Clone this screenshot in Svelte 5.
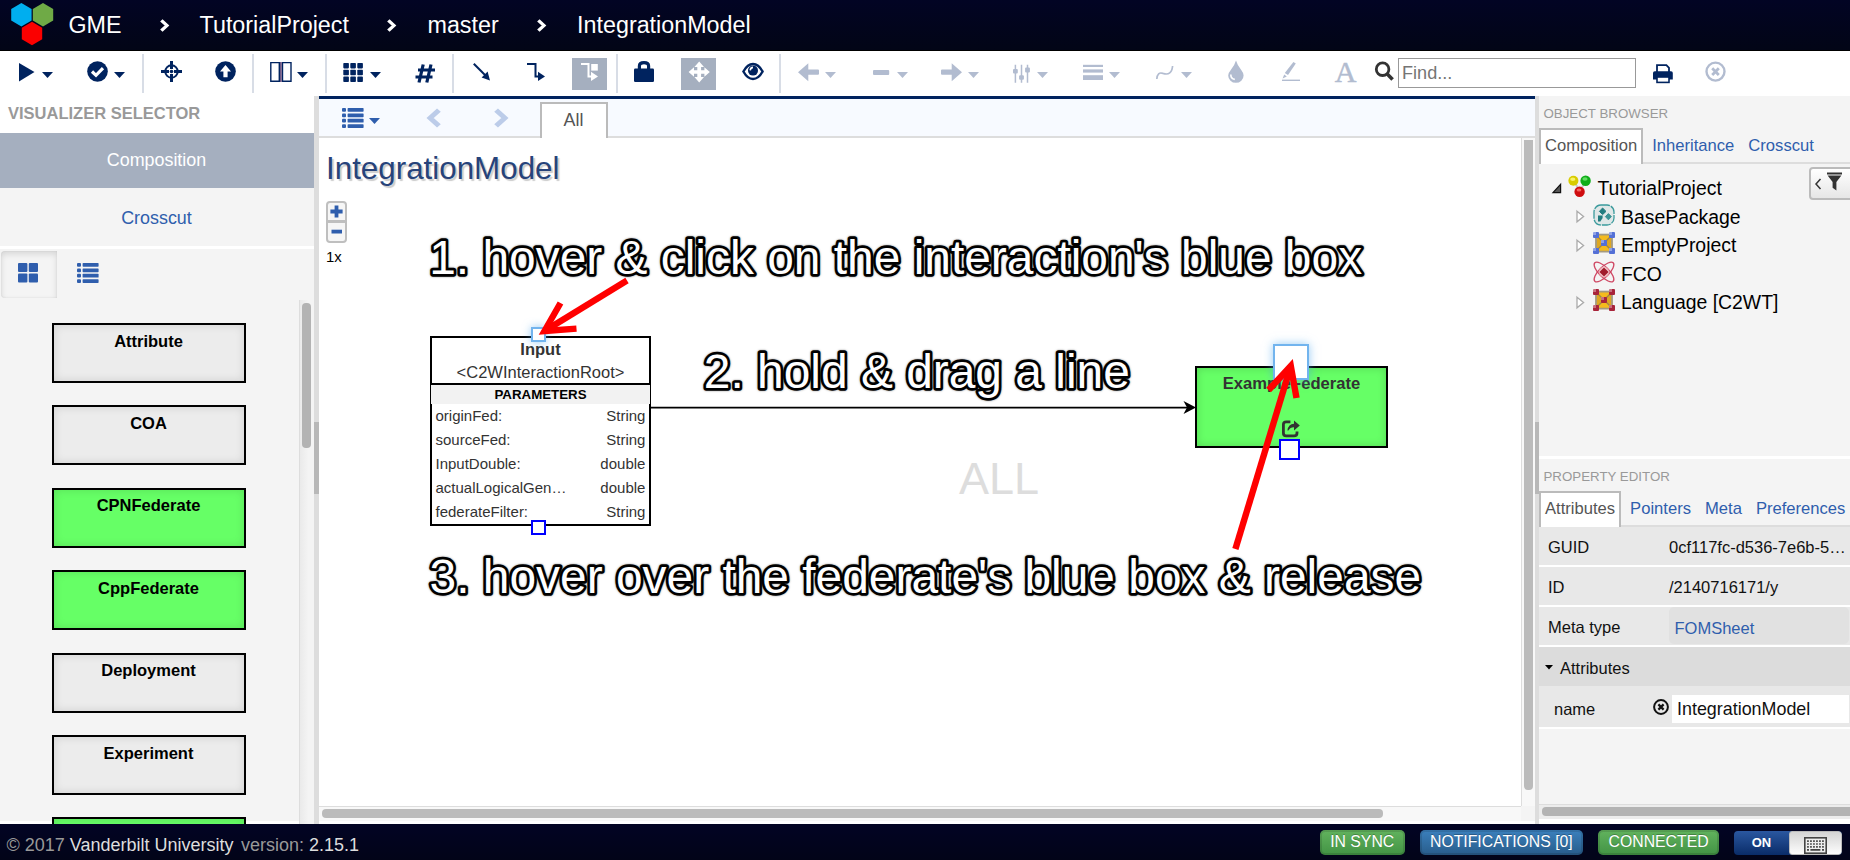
<script>
  const crumbs = [
    { text: 'GME', gap: 14.4 },
    { text: 'TutorialProject', gap: 30.5 },
    { text: 'master', gap: 31 },
    { text: 'IntegrationModel', gap: 30.8 }
  ];

  // icon name, width, space before it, and the space before its caret (if it has one)
  const tools = [
    { i: 'play', w: 15, g: 19, c: 8 },
    { i: 'check', w: 21, g: 34, c: 6 },
    { sep: true, g: 17 },
    { i: 'cross', w: 21, g: 17 },
    { i: 'up', w: 21, g: 33 },
    { sep: true, g: 16 },
    { i: 'cols', w: 22, g: 16, c: 5 },
    { sep: true, g: 17 },
    { i: 'grid', w: 20, g: 16, c: 7 },
    { i: 'hash', w: 20, g: 34 },
    { sep: true, g: 17 },
    { i: 'line', w: 18, g: 19 },
    { i: 'elbow', w: 18, g: 36 },
    { i: 'route', w: 35, g: 27, on: true },
    { sep: true, g: 9 },
    { i: 'lock', w: 21, g: 16 },
    { i: 'move', w: 35, g: 26, on: true },
    { i: 'eye', w: 22, g: 26 },
    { sep: true, g: 15 },
    { i: 'left', w: 21, g: 17, c: 6, off: true },
    { i: 'minus', w: 16, g: 37, c: 8, off: true },
    { i: 'right', w: 21, g: 33, c: 6, off: true },
    { i: 'sliders', w: 17, g: 34, c: 7, off: true },
    { i: 'lines', w: 20, g: 35, c: 6, off: true },
    { i: 'curve', w: 18, g: 36, c: 7, off: true },
    { i: 'drop', w: 16, g: 36, off: true },
    { i: 'pen', w: 18, g: 38, off: true },
    { i: 'font', w: 21, g: 35, off: true }
  ];

  const parts = [
    { name: 'Attribute' },
    { name: 'COA' },
    { name: 'CPNFederate', green: true },
    { name: 'CppFederate', green: true },
    { name: 'Deployment' },
    { name: 'Experiment' },
    { name: '', green: true }
  ];

  const params = [
    ['originFed:', 'String'],
    ['sourceFed:', 'String'],
    ['InputDouble:', 'double'],
    ['actualLogicalGen…', 'double'],
    ['federateFilter:', 'String']
  ];

  const tree = [
    { name: 'BasePackage', icon: 'pkg', open: true },
    { name: 'EmptyProject', icon: 'blue', open: true },
    { name: 'FCO', icon: 'atom', open: false },
    { name: 'Language [C2WT]', icon: 'red', open: true }
  ];
</script>

{#snippet caret()}
  <svg class="caret" width="11" height="6" viewBox="0 0 11 6"><path d="M0 0H11L5.5 6Z" fill="currentColor" /></svg>
{/snippet}

{#snippet listIcon()}
  <svg width="22" height="20" viewBox="0 0 22 20" fill="currentColor">
    {#each [0, 5.4, 10.8, 16.2] as y}
      <rect x="0" {y} width="4" height="3.8" rx="1" />
      <rect x="5.6" {y} width="16" height="3.8" rx=".7" />
    {/each}
  </svg>
{/snippet}

{#snippet chevron(w, h, s)}
  <svg width={w} height={h} viewBox="0 0 8 13" preserveAspectRatio="none"><path d="M1.2 1.4L6.2 6.5L1.2 11.6" fill="none" stroke="currentColor" stroke-width={s} /></svg>
{/snippet}

{#snippet hollowArrow()}
  <svg width="9" height="13" viewBox="0 0 9 13"><path d="M1 1.2L7.6 6.5L1 11.8Z" fill="#fff" stroke="#aaa" stroke-width="1.3" /></svg>
{/snippet}

{#snippet glyph(name, w)}
  <svg width={w} height="22" viewBox="0 0 {w} 22" fill="currentColor">
    {#if name === 'play'}
      <path d="M0 2L15.5 11L0 20.4Z" />
    {:else if name === 'check'}
      <circle cx="10.5" cy="10.5" r="10.3" /><path d="M5 10.5L9 14.3L16 7.2" fill="none" stroke="#fff" stroke-width="3.2" />
    {:else if name === 'cross'}
      <circle cx="10.5" cy="10.5" r="6.2" fill="none" stroke="currentColor" stroke-width="2" />
      <path d="M10.5 0V8M10.5 13V21M0 10.5H8M13 10.5H21" stroke="currentColor" stroke-width="3" />
      <circle cx="10.5" cy="10.5" r="1.8" />
    {:else if name === 'up'}
      <circle cx="10.5" cy="10.5" r="10.3" /><path d="M10.5 4L16 10.4H12.6V16.2H8.4V10.4H5Z" fill="#fff" />
    {:else if name === 'cols'}
      <path d="M.8 1.6H9.3V20.2H.8ZM12.5 1.6H21V20.2H12.5Z" fill="none" stroke="currentColor" stroke-width="1.4" />
      <path d="M10.9 1V21" stroke="#6f5a86" stroke-width="1.8" />
    {:else if name === 'grid'}
      {#each [2, 8.8, 15.6] as y}
        {#each [0.3, 7.3, 14.3] as x}<rect {x} {y} width="5.6" height="5.4" rx=".8" />{/each}
      {/each}
    {:else if name === 'hash'}
      <path d="M8.2 3.5L4 21.5M16 3.5L11.8 21.5M3 9H20M.5 16H17.5" fill="none" stroke="currentColor" stroke-width="3.2" />
    {:else if name === 'line'}
      <path d="M.8 2.8L13 15" stroke="currentColor" stroke-width="2" /><path d="M17 19.4L8.6 16.6L14.6 10.6Z" />
    {:else if name === 'elbow'}
      <path d="M0 3H8.5V15.6H12" fill="none" stroke="currentColor" stroke-width="2" /><path d="M11 10.8L18 15.4L11 20Z" />
    {:else if name === 'route'}
      <path d="M9 3H16.5V15.6H20" fill="none" stroke="currentColor" stroke-width="2" /><path d="M19 10.8L26 15.4L19 20Z" />
      <rect x="19.2" y="3" width="6.6" height="6.6" />
    {:else if name === 'lock'}
      <rect x="0" y="7.6" width="20" height="13.4" rx="1.2" /><path d="M5.4 9V5Q5.4 1.6 10 1.6T14.6 5V9" fill="none" stroke="currentColor" stroke-width="3.2" />
    {:else if name === 'move'}
      <path d="M18.2 .5L23 6H20.1V9.2H23.4V6.2L28.8 11L23.4 15.8V12.8H20.1V16H23L18.2 21.5L13.4 16H16.3V12.8H13V15.8L7.6 11L13 6.2V9.2H16.3V6H13.4Z" />
    {:else if name === 'eye'}
      <path d="M1.4 10.5Q5.5 3 11 3T20.6 10.5Q16.5 18 11 18T1.4 10.5Z" fill="none" stroke="currentColor" stroke-width="2.4" />
      <circle cx="11" cy="9.6" r="5" /><path d="M8.2 9.4Q8.4 6.6 11 6.4" fill="none" stroke="#fff" stroke-width="1.6" />
    {:else if name === 'left'}
      <path d="M0 11.2L10.3 2.2V8.6H20Q21 8.6 21 9.6V12.8Q21 13.8 20 13.8H10.3V20.2Z" />
    {:else if name === 'minus'}
      <rect x="0" y="9" width="16.2" height="5" rx="1" />
    {:else if name === 'right'}
      <path d="M21 11.2L10.7 2.2V8.6H1Q0 8.6 0 9.6V12.8Q0 13.8 1 13.8H10.7V20.2Z" />
    {:else if name === 'sliders'}
      <path d="M2.4 3.8V21.8M8.5 3.8V21.8M14.5 3.8V21.8" stroke="currentColor" stroke-width="1.5" />
      <rect x="0" y="8" width="4.8" height="4.6" rx="1" /><rect x="6.1" y="14.2" width="4.8" height="4.6" rx="1" /><rect x="12.1" y="6.6" width="4.8" height="4.8" rx="1" />
    {:else if name === 'lines'}
      <rect y="3.8" width="20" height="2.2" /><rect y="8.4" width="20" height="3.2" /><rect y="14.2" width="20" height="4.8" />
    {:else if name === 'curve'}
      <path d="M.8 18Q1.4 10.4 7 12.4Q15.6 15.2 16.6 5" fill="none" stroke="currentColor" stroke-width="1.7" />
    {:else if name === 'drop'}
      <path d="M8 -.6Q9.4 4.4 13.4 9.2Q15.6 12 15.6 14.4A7.7 7.4 0 0 1 .2 14.4Q.2 12 2.6 9.2Q6.6 4.4 8 -.6Z" />
      <path d="M2.8 13.6Q2.8 18 6.8 18.4" fill="none" stroke="#fff" stroke-width="1.6" />
    {:else if name === 'pen'}
      <path d="M11.4 1L13.8 2.6L6 14L2.8 12Z" /><path d="M2.2 13.4L4.8 15.4L.6 17.4Z" /><rect x="0" y="18.6" width="18" height="1.4" />
    {:else if name === 'font'}
      <text x="10.5" y="21.4" text-anchor="middle" font-family="Liberation Serif, serif" font-size="30" stroke="currentColor" stroke-width=".5">A</text>
    {:else if name === 'search'}
      <circle cx="7.6" cy="8.2" r="6.3" fill="none" stroke="currentColor" stroke-width="2.8" /><path d="M12 12.8L17.6 18.4" stroke="currentColor" stroke-width="3.6" />
    {:else if name === 'print'}
      <path d="M4 11V4.2H13.4L16 6.8V11" fill="none" stroke="currentColor" stroke-width="1.8" />
      <path d="M0 12Q0 10.2 1.8 10.2H18Q19.8 10.2 19.8 12V18.4H0Z" /><rect x="4" y="16" width="12" height="5.4" fill="#fff" stroke="currentColor" stroke-width="1.6" />
    {:else if name === 'close'}
      <circle cx="10.5" cy="10.6" r="9" fill="none" stroke="currentColor" stroke-width="2.4" /><path d="M7.2 7.3L13.8 13.9M13.8 7.3L7.2 13.9" stroke="currentColor" stroke-width="2.8" />
    {/if}
  </svg>
{/snippet}

{#snippet treeIcon(name)}
  <svg width="22" height="22" viewBox="0 0 22 22">
    {#if name === 'pkg'}
      <rect x="1" y="1" width="20" height="20" rx="7" fill="#dfe7e7" stroke="#3a9a9c" stroke-width="1.3" stroke-dasharray="9 1" />
      <path d="M9.6 4L13 7.4L9.6 10.6L6.4 7.4Z" fill="#237d80" stroke="#237d80" stroke-linejoin="round" /><path d="M5 11.6H9.6V14L7.4 17.4H5Z" fill="#237d80" /><path d="M15.4 9.6L18.4 12.6L15.4 15.8L12.4 12.6Z" fill="#3d9496" stroke="#3d9496" stroke-linejoin="round" />
    {:else if name === 'atom'}
      <g fill="none" stroke="#cf4763" stroke-width="1.3">
        <ellipse cx="11" cy="11" rx="13" ry="5" transform="rotate(45 11 11)" /><ellipse cx="11" cy="11" rx="13" ry="5" transform="rotate(-45 11 11)" />
      </g>
      <circle cx="11" cy="11" r="5.4" fill="#f2b8be" opacity=".7" /><path d="M11 6.4L15.6 11L11 15.6L6.4 11Z" fill="#a01b2c" />
    {:else}
      {@const c = name === 'blue' ? '#5470d6' : '#a8243a'}
      <rect x="3" y="2.6" width="16" height="17" fill="#f5bb1d" stroke="#a39a80" stroke-width="1.8" />
      <path d="M4 3.6L11 11L18 3.6V18.6L11 11L4 18.6Z" fill="#cf9a24" opacity=".6" />
      <path d="M3 3L19 19M19 3L3 19" stroke="#8d7a55" stroke-width="1.2" opacity=".8" />
      <g fill={c}>
        <rect x="0" y="0" width="6" height="6" rx="1" /><rect x="16" y="0" width="6" height="6" rx="1" />
        <rect x="0" y="16" width="6" height="6" rx="1" /><rect x="16" y="16" width="6" height="6" rx="1" /><rect x="8" y="8" width="6" height="6" rx="1" />
      </g>
      <g fill="#fff" opacity=".35"><rect x="0" y="0" width="3" height="3" /><rect x="16" y="0" width="3" height="3" /><rect x="0" y="16" width="3" height="3" /><rect x="16" y="16" width="3" height="3" /><rect x="8" y="8" width="3" height="3" /></g>
    {/if}
  </svg>
{/snippet}

<div class="app">
  <header>
    <svg class="logo" width="43" height="43" viewBox="0 0 43 43">
      <path d="M10.4 0L20.6 6V17.4L10.4 23.4L.2 17.4V6Z" fill="#00aeef" />
      <path d="M32 0L42.2 6V17.4L32 23.4L21.8 17.4V6Z" fill="#6faa46" />
      <path d="M21 18.8L31.2 24.8V36.2L21 42.2L10.8 36.2V24.8Z" fill="#fb0000" />
    </svg>
    {#each crumbs as c, n}
      {#if n}<span class="next">{@render chevron(9, 13, 3)}</span>{/if}
      <span class="crumb" style:margin-left="{c.gap}px">{c.text}</span>
    {/each}
  </header>

  <div class="toolbar">
    {#each tools as t}
      {#if t.sep}
        <i class="sep" style:margin-left="{t.g}px"></i>
      {:else}
        <span class="tool" class:on={t.on} class:off={t.off} style:margin-left="{t.g}px">
          {@render glyph(t.i, t.w)}
          {#if t.c}<span class="drop" style:margin-left="{t.c}px">{@render caret()}</span>{/if}
        </span>
      {/if}
    {/each}
    <span class="tool search">{@render glyph('search', 19)}</span>
    <input class="find" placeholder="Find..." />
    <span class="tool print">{@render glyph('print', 20)}</span>
    <span class="tool off clear">{@render glyph('close', 21)}</span>
  </div>

  <main>
    <aside class="left">
      <div class="vis-title">VISUALIZER SELECTOR</div>
      <div class="vis active">Composition</div>
      <div class="vis">Crosscut</div>
      <div class="views">
        <span class="view pressed">
          <svg width="20" height="20" viewBox="0 0 20 20" fill="currentColor"><rect width="9.4" height="9" rx="1" /><rect x="10.8" width="9.2" height="9" rx="1" /><rect y="10.4" width="9.4" height="9" rx="1" /><rect x="10.8" y="10.4" width="9.2" height="9" rx="1" /></svg>
        </span>
        <span class="view">{@render listIcon()}</span>
      </div>
      <div class="palette">
        <div class="parts">
          {#each parts as p}<div class="part" class:green={p.green}>{p.name}</div>{/each}
        </div>
        <div class="vtrack"><div class="vthumb"></div></div>
      </div>
    </aside>
    <div class="split wide"><i></i></div>

    <section class="center">
      <nav class="tabs">
        <span class="menu">{@render listIcon()}<span class="drop">{@render caret()}</span></span>
        <span class="arrow back">{@render chevron(14, 20, 3)}</span>
        <span class="arrow">{@render chevron(14, 20, 3)}</span>
        <span class="tab">All</span>
      </nav>
      <div class="work">
        <div class="canvas">
          <h1>IntegrationModel</h1>
          <div class="zoom">
            <span><svg width="13" height="13" viewBox="0 0 13 13"><path d="M6.5 .4V12.6M.4 6.5H12.6" stroke="currentColor" stroke-width="3.8" /></svg></span>
            <span><svg width="13" height="13" viewBox="0 0 13 13"><path d="M1.5 6.6H12" stroke="currentColor" stroke-width="3.8" /></svg></span>
          </div>
          <div class="ratio">1x</div>
          <div class="watermark">ALL</div>

          <div class="node input-node">
            <div class="head"><b>Input</b><span>&lt;C2WInteractionRoot&gt;</span></div>
            <div class="band">PARAMETERS</div>
            {#each params as [k, v]}<div class="param"><span>{k}</span><span>{v}</span></div>{/each}
          </div>
          <div class="node fed-node">
            <b>ExampleFederate</b>
            <svg width="18" height="18" viewBox="0 0 18 18"><path d="M8.4 1.8H4.2Q1.4 1.8 1.4 4.6V13Q1.4 15.9 4.2 15.9H12Q15 15.9 15 13V11.6" fill="none" stroke="#333" stroke-width="2.8" /><path d="M5.4 10.4Q6.4 4 12 3.8V.6L17.8 5.6L12 10.6V7.2Q8 7.2 6.4 10.6Z" fill="#333" /></svg>
          </div>
          <i class="port glow p1"></i>
          <i class="port p2"></i>
          <i class="port glow p3"></i>
          <i class="port p4"></i>

          <svg class="overlay" width="1202" height="668" viewBox="319 138 1202 668">
            <path d="M651 408.4H1190" stroke="#aaa" stroke-width="1.2" /><path d="M651 407.5H1190" stroke="#000" stroke-width="1.3" />
            <path d="M1196 407.5L1183.5 401L1187 407.5L1183.5 414Z" />
            <g class="note">
              <text x="429.2" y="273.5">1. hover &amp; click on the interaction's blue box</text>
              <text x="703.8" y="387.5">2. hold &amp; drag a line</text>
              <text x="429.6" y="592.5">3. hover over the federate's blue box &amp; release</text>
            </g>
            <g fill="none" stroke="#f00" stroke-width="6.4" stroke-miterlimit="10">
              <path d="M627 280.5L544.5 331" /><path d="M560.5 303L544.5 331L576.5 328.6" />
              <path d="M1235.4 549L1290.8 366" /><path d="M1268.6 390L1290.8 366L1296.5 398" />
            </g>
          </svg>
        </div>
        <div class="cv-track"><div></div></div>
        <div class="ch-track"><div></div></div>
        <div class="corner"></div>
      </div>
    </section>
    <div class="split"><i></i></div>

    <aside class="right">
      <div class="browser">
        <div class="side-title">OBJECT BROWSER</div>
        <nav class="side-tabs"><span class="cur">Composition</span><span style:margin-left="9px">Inheritance</span><span style:margin-left="14px">Crosscut</span></nav>
        <div class="filter">
          <svg width="40" height="30" viewBox="0 0 40 30"><path d="M9.5 10L5 15L9.5 20" fill="none" stroke="#333" stroke-width="1.5" /><path d="M16 3.6H31V5.4H16ZM16.6 6.6H30.4L25.4 13V21.6L21.6 18.8V13Z" fill="#333" /></svg>
        </div>
        <div class="tree">
          <div class="root">
            <svg width="10" height="11" viewBox="0 0 10 11"><path d="M8.6 1.4V9.6H1Z" fill="#555" stroke="#111" stroke-width="1.2" /></svg>
            <svg class="balls" width="23" height="23" viewBox="0 0 23 23">
              <path d="M5 5L12 16L18 5" stroke="#c8c8c8" stroke-width="2" fill="none" />
              <circle cx="5.4" cy="5.8" r="5" fill="#d8cc00" /><circle cx="17.6" cy="5.8" r="5.2" fill="#0fae18" /><circle cx="11.6" cy="16.8" r="5.2" fill="#cf0d10" />
              <ellipse cx="4.8" cy="4.2" rx="2.6" ry="1.8" fill="#f8f26a" /><ellipse cx="17" cy="4" rx="2.6" ry="1.8" fill="#62dc62" /><ellipse cx="11" cy="15" rx="2.4" ry="1.6" fill="#f4635f" />
            </svg>
            <span>TutorialProject</span>
          </div>
          {#each tree as t}
            <div class="leaf"><span class="tri">{#if t.open}{@render hollowArrow()}{/if}</span>{@render treeIcon(t.icon)}<span>{t.name}</span></div>
          {/each}
        </div>
      </div>
      <div class="props">
        <div class="side-title">PROPERTY EDITOR</div>
        <nav class="side-tabs"><span class="cur">Attributes</span><span style:margin-left="9px">Pointers</span><span style:margin-left="14px">Meta</span><span style:margin-left="14px">Preferences</span></nav>
        <div class="row"><label>GUID</label><span>0cf117fc-d536-7e6b-5…</span></div>
        <div class="row tall"><label>ID</label><span>/2140716171/y</span></div>
        <div class="row"><label>Meta type</label><span class="meta">FOMSheet</span></div>
        <div class="group"><svg width="8" height="5" viewBox="0 0 8 5"><path d="M0 0H8L4 4.6Z" /></svg>Attributes</div>
        <div class="row name"><label>name</label>
          <svg width="16" height="16" viewBox="0 0 16 16"><circle cx="8" cy="8" r="6.9" fill="none" stroke="#111" stroke-width="2" /><path d="M5.4 5.4L10.6 10.6M10.6 5.4L5.4 10.6" stroke="#111" stroke-width="2.2" /></svg>
          <span class="field">IntegrationModel</span></div>
      </div>
      <div class="r-track"><div></div></div>
    </aside>
  </main>

  <footer>
    <span class="dim">© 2017</span><span class="lit">Vanderbilt University</span><span class="dim v">version:</span><span class="lit">2.15.1</span>
    <span class="grow"></span>
    <span class="badge ok">IN SYNC</span>
    <span class="badge info">NOTIFICATIONS [0]</span>
    <span class="badge ok">CONNECTED</span>
    <span class="switch"><b>ON</b><i>
      <svg width="23" height="17" viewBox="0 0 23 17"><rect x=".8" y=".8" width="21.4" height="15.4" fill="#eee" stroke="#444" stroke-width="1.6" /><path d="M3 4.2H20M3 7H20M3 9.8H20" stroke="#555" stroke-width="1.7" stroke-dasharray="1.9 1.1" /><path d="M3 12.8H5M6.4 12.8H16.4M18 12.8H20" stroke="#444" stroke-width="1.8" /></svg>
    </i></span>
  </footer>
</div>

<style>
  :global(body) { margin: 0; overflow: hidden; }
  * { box-sizing: border-box; }
  svg { display: block; flex: none; overflow: visible; }
  .app { width: 1850px; height: 860px; display: flex; flex-direction: column; background: #fff; font-family: "Liberation Sans", Arial, sans-serif; font-size: 16.5px; color: #333; overflow: hidden; white-space: nowrap; }

  header { height: 51px; flex: none; display: flex; align-items: center; padding-left: 11px; background: linear-gradient(#020424, #020516); border-bottom: 1px solid #000; color: #fff; font-size: 23.3px; }
  .logo { margin-top: -1px; }
  .crumb { line-height: 51px; padding-top: 1px; }
  .next { margin-left: 38.6px; padding-top: 1px; }

  .toolbar { height: 45px; flex: none; display: flex; align-items: flex-start; padding-top: 3px; color: #00235f; }
  .sep { width: 2px; height: 39px; background: #d8dde6; flex: none; }
  .tool { display: flex; align-items: flex-start; padding: 7px 0 0; height: 36px; flex: none; }
  .tool .drop { padding-top: 11px; }
  .tool.off { color: #b2bcd0; }
  .tool.on { margin-top: 4px; padding-top: 3px; height: 32px; background: #a5afbf; color: #fff; }
  .search { margin-left: 19px; color: #333; }
  .find { width: 238px; height: 30px; margin: 4px 0 0 4px; padding: 0 3px; border: 1px solid #999; font: 18.1px "Liberation Sans", sans-serif; outline: 0; border-radius: 0; background: #fff; }
  .find::placeholder { color: #757575; }
  .print { margin-left: 16.5px; }
  .clear { margin-left: 32.5px; }

  main { height: 728px; flex: none; display: flex; }
  .left { width: 314px; flex: none; display: flex; flex-direction: column; height: 728px; }
  .vis-title { height: 37px; padding: 0 0 0 8px; line-height: 35px; font-weight: bold; color: #999; }
  .vis { height: 58px; padding: 2px 1px 0 0; line-height: 56px; text-align: center; font-size: 17.9px; color: #2f5ead; background: #f4f4f4; }
  .vis.active { height: 55px; padding: 0 1px 0 0; line-height: 55px; background: #a5afbf; color: #fff; }
  .views { height: 54px; border-top: 3px solid #fff; background: #f4f4f4; display: flex; padding: 2px 0 0 1px; color: #2f5ead; }
  .view { width: 56px; height: 47px; display: flex; justify-content: center; padding: 12px 0 0; margin-right: 3px; }
  .pressed { border-radius: 4px 0 0 4px; box-shadow: inset 0 3px 6px rgba(0, 0, 0, .12), inset 0 0 2px rgba(0, 0, 0, .1); padding-right: 2px; }
  .palette { height: 524px; display: flex; background: linear-gradient(#f4f4f4 521px, #fff 521px); overflow: hidden; }
  .parts { width: 299px; display: flex; flex-direction: column; align-items: center; gap: 22.4px; padding: 23px 2px 0 0; }
  .part { width: 194px; height: 60px; flex: none; border: 2px solid #000; padding-top: 4.6px; line-height: 22px; text-align: center; font-weight: bold; color: #000; background: #ececec; box-shadow: inset 0 0 10px rgba(0, 0, 0, .12); }
  .green { background: #6f6; }
  .vtrack { width: 15px; border-left: 1px solid #ddd; background: linear-gradient(90deg, #eaeaea, #f4f4f4 60%); padding: 3px 2px; }
  .vthumb { width: 9px; height: 145px; border-radius: 4px; background: #b3b3b3; }

  .split { width: 4px; flex: none; background: #ddd; padding-top: 326px; }
  .split i { display: block; height: 72px; background: #b8b8b8; }
  .wide { width: 5px; }

  .center { width: 1216px; flex: none; border-top: 3px solid #00235f; }
  .tabs { height: 39px; display: flex; align-items: flex-start; background: #f7faff; border-bottom: 2px solid #ddd; padding-left: 23px; color: #2f5ead; }
  .menu { display: flex; padding-top: 8.5px; }
  .menu .drop { padding: 10px 0 0 5px; }
  .arrow { color: #bccce9; padding-top: 8.5px; margin-left: 53px; }
  .back { margin-left: 47px; transform: scaleX(-1); }
  .tab { width: 68px; height: 36px; margin: 3px 0 0 32px; padding-right: 1px; border: 2px solid #bbb; border-bottom: 0; background: #fff; color: #555; font-size: 17.9px; line-height: 32px; text-align: center; }
  .work { display: grid; grid-template: 668px 15px / 1202px 14px; height: 683px; }
  .canvas { position: relative; background: #fff; overflow: hidden; }
  h1 { position: absolute; left: 7px; top: 11px; margin: 0; font-size: 31.35px; font-weight: normal; line-height: 40px; color: #27437a; text-shadow: 2px 2px 1px #ccc; }
  .zoom { position: absolute; left: 7px; top: 63px; width: 21px; height: 42px; border: 2px solid #bfbfbf; border-radius: 4px; background: #f6f6f6; color: #2f5ead; }
  .zoom span { display: block; height: 20px; padding: 1.5px 0 0 1.6px; border-bottom: 3px solid #bfbfbf; }
  .zoom span + span { border: 0; }
  .ratio { position: absolute; left: 7px; top: 110px; font-size: 14.9px; line-height: 18px; color: #000; }
  .watermark { position: absolute; left: 640px; top: 316px; font-size: 45px; line-height: 50px; color: #ddd; }
  .node { position: absolute; border: 2px solid #000; background: #fff; }
  .input-node { left: 111px; top: 198px; width: 221px; height: 190px; }
  .head { height: 47px; border-bottom: 2px solid #000; text-align: center; display: flex; flex-direction: column; }
  .head b { line-height: 23px; }
  .head span { line-height: 22px; }
  .band { margin: 0 -1px; height: 19px; background: #f2f2f2; color: #000; font-size: 13.3px; font-weight: bold; line-height: 19px; text-align: center; }
  .param { height: 24px; line-height: 24px; padding: 0 3.6px 0 3.5px; font-size: 15px; display: flex; justify-content: space-between; }
  .fed-node { left: 876px; top: 228px; width: 193px; height: 82px; background: #6f6; box-shadow: inset 0 0 8px rgba(0, 0, 0, .16); display: flex; flex-direction: column; align-items: center; }
  .fed-node b { line-height: 22px; margin-top: 4.5px; font-size: 16.6px; }
  .fed-node svg { margin: 25px 1px 0 0; }
  .port { position: absolute; border: 2px solid #00f; background: #fff; width: 15px; height: 15px; }
  .glow { border-color: #72b4ee; box-shadow: 0 0 9px rgba(82, 168, 236, .6); }
  .p1 { left: 212px; top: 189px; }
  .p2 { left: 212px; top: 382px; }
  .p3 { left: 954px; top: 206px; width: 36px; height: 36px; }
  .p4 { left: 960px; top: 301px; width: 21px; height: 21px; }
  .overlay { position: absolute; left: 0; top: 0; }
  .note text { font-size: 47.9px; fill: #fff; stroke: #000; stroke-width: 5.4px; stroke-linejoin: round; paint-order: stroke; text-shadow: 0 0 2px rgba(0, 0, 0, .5); }
  .cv-track { border-left: 1px solid #ddd; background: #f8f8f8; padding: 2px 0 0 2px; }
  .cv-track div { width: 9px; height: 650px; border-radius: 0 0 4px 4px; background: #bbb; }
  .ch-track { border-top: 1px solid #ddd; background: #f8f8f8; padding: 2px 0 0 3px; }
  .ch-track div { width: 1061px; height: 9px; border-radius: 4px; background: #bbb; }
  .corner { background: #f4f4f4; }

  .right { width: 311px; flex: none; background: #f4f4f4; display: flex; flex-direction: column; overflow: hidden; position: relative; }
  .browser { height: 363px; flex: none; border-bottom: 3px solid #fff; }
  .side-title { height: 32px; padding: 3px 0 0 4.5px; line-height: 29px; font-size: 13.3px; color: #999; }
  .side-tabs { height: 36px; display: flex; box-shadow: inset 0 -2px #ddd; color: #2f5ead; font-size: 16.6px; }
  .side-tabs span { line-height: 34px; padding-top: 1px; flex: none; }
  .side-tabs .cur { border: 2px solid #bbb; border-bottom: 0; padding: 0 4px; line-height: 32px; background: #fff; color: #555; }
  .filter { position: absolute; right: -6px; top: 71px; width: 47px; height: 33px; border: 2px solid #bbb; border-radius: 4px; background: linear-gradient(#fff, #e6e6e6); }
  .tree { padding: 8px 0 0 13px; color: #000; font-size: 19.4px; }
  .root, .leaf { display: flex; align-items: center; height: 28.5px; }
  .root span { margin-left: 6.5px; padding-top: 4px; }
  .root svg { margin-top: 4px; }
  .root .balls { margin: 0 0 0 6px; }
  .leaf { padding-left: 24px; }
  .leaf > span:last-child { margin-left: 6px; padding-top: 5px; }
  .tri { width: 17px; padding-top: 4px; }
  .props { height: 345px; }
  .row { height: 40px; padding-left: 9px; display: flex; background: #e8e8e8; border-bottom: 2px solid #fff; line-height: 38px; color: #111; }
  .row label { width: 121px; padding-top: 1px; }
  .row span { padding-top: 1px; }
  .row .meta { width: 180px; height: 37px; padding: 1.5px 0 0 5.5px; background: #e1e1e1; color: #2f5ead; border-radius: 5px; }
  .group { height: 39px; padding: 2px 0 0 6px; background: #dcdcdc; line-height: 38px; color: #111; display: flex; align-items: center; gap: 7px; }
  .name { height: 43px; padding-left: 15px; }
  .name label { width: 99px; padding-top: 4px; }
  .name svg { margin: 13px 3px 0 0; }
  .row .field { width: 177px; height: 28px; margin-top: 9px; padding: 0 0 0 5px; line-height: 29px; background: #fff; font-size: 17.9px; }
  .r-track { height: 15px; border-top: 1px solid #ddd; background: #ececec; padding: 2px 0 0 3px; }
  .r-track div { width: 320px; height: 9px; border-radius: 4px; background: #b3b3b3; }
  .right::after { content: ""; height: 5px; background: #fff; }

  footer { height: 36px; flex: none; display: flex; align-items: flex-start; background: linear-gradient(#020424, #020418); padding: 6px 8px 0 6.5px; font-size: 18px; }
  .dim, .lit { line-height: 31px; }
  .dim { color: #999; }
  .lit { color: #ddd; margin-left: 5px; }
  .v { margin-left: 7.5px; }
  .grow { flex: 1; }
  .badge { height: 25px; padding: 0 10.4px; margin-right: 15px; border-radius: 5px; font-size: 15.8px; line-height: 23px; color: #fff; text-shadow: 0 -1px 0 rgba(0, 0, 0, .25); box-shadow: inset 0 0 0 2px rgba(0, 0, 0, .12); }
  .ok { background: linear-gradient(#62b35e, #429344); }
  .info { background: linear-gradient(#3b80bd, #285c8a); }
  .switch { width: 108px; height: 24px; margin-top: 1px; display: flex; border-radius: 4px; overflow: hidden; background: linear-gradient(#2a57a0, #0a2c68); }
  .switch b { width: 55px; text-align: center; color: #fff; font-size: 13px; line-height: 24px; }
  .switch i { flex: 1; display: flex; justify-content: center; padding-top: 6px; border: 1px solid #bbb; border-radius: 3px; background: linear-gradient(#d4d4d4, #fdfdfd); }
  .switch svg { margin-top: -1px; }
</style>
